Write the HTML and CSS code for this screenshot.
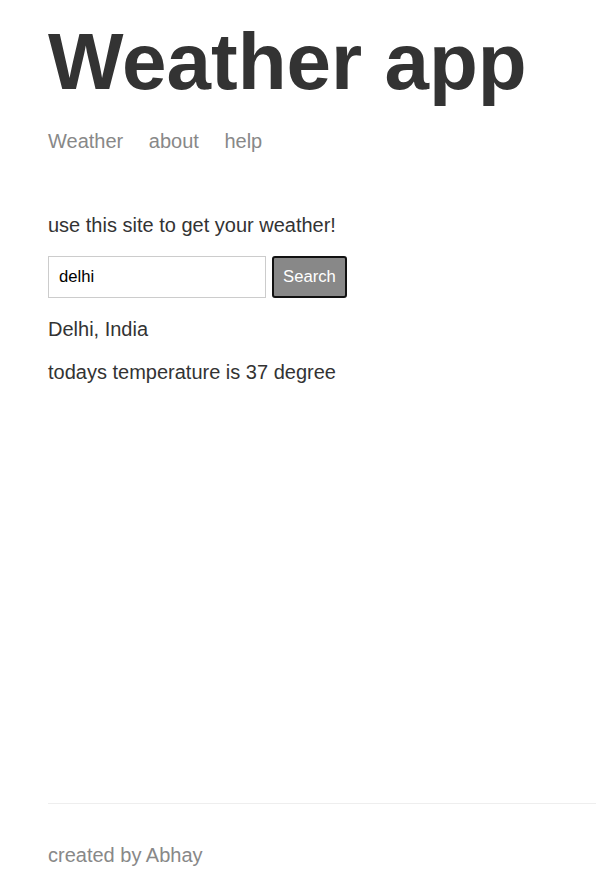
FILE: index.html
```html
<!DOCTYPE html>
<html>
<head>
<meta charset="utf-8">
<title>Weather</title>
<link rel="stylesheet" href="styles.css">
</head>
<body>
<div class="main-content">
  <header class="header">
    <h1 class="title">Weather app</h1>
    <nav class="nav">
      <a class="nav-link" href="#">Weather</a>
      <a class="nav-link" href="#">about</a>
      <a class="nav-link" href="#">help</a>
    </nav>
  </header>
  <p class="text intro">use this site to get your weather!</p>
  <form class="search-form">
    <input class="search-input" type="text" value="delhi"><button class="search-button" type="button">Search</button>
  </form>
  <p class="text">Delhi, India</p>
  <p class="text">todays temperature is 37 degree</p>
</div>
<footer class="footer">
  <p class="footer-text">created by Abhay</p>
</footer>
</body>
</html>
```
FILE: styles.css
```css
html, body {
  margin: 0;
  padding: 0;
}
body {
  font-family: "Liberation Sans", Arial, sans-serif;
  font-size: 20px;
  color: #333333;
  padding-left: 48px;
  min-height: 100vh;
  box-sizing: border-box;
  display: flex;
  flex-direction: column;
}
.main-content {
  flex-grow: 1;
}
.header {
  margin-bottom: 61px;
}
.title {
  font-size: 80px;
  font-weight: bold;
  margin: 16px 0 22px;
}
.nav-link {
  color: #888888;
  text-decoration: none;
  margin-right: 20px;
}
.text {
  margin: 20px 0;
}
.intro {
  margin-bottom: 19px;
}
.search-form {
  display: flex;
  align-items: stretch;
  gap: 6px;
}
.search-input {
  box-sizing: border-box;
  width: 218px;
  height: 42px;
  border: 1px solid #cccccc;
  padding: 10px;
  font-family: "Liberation Sans", Arial, sans-serif;
  font-size: 16.67px;
  color: #000;
  margin: 0;
}
.search-button {
  box-sizing: border-box;
  width: 75px;
  height: 42px;
  margin: 0;
  background: #888888;
  color: #ffffff;
  border: 2px solid #111111;
  border-radius: 3px;
  padding: 0;
  font-family: "Liberation Sans", Arial, sans-serif;
  font-size: 16.67px;
}
.footer {
  color: #888888;
  border-top: 1px solid #eeeeee;
  padding: 20px 0 3px;
}
.footer-text {
  margin: 20px 0;
}
```
